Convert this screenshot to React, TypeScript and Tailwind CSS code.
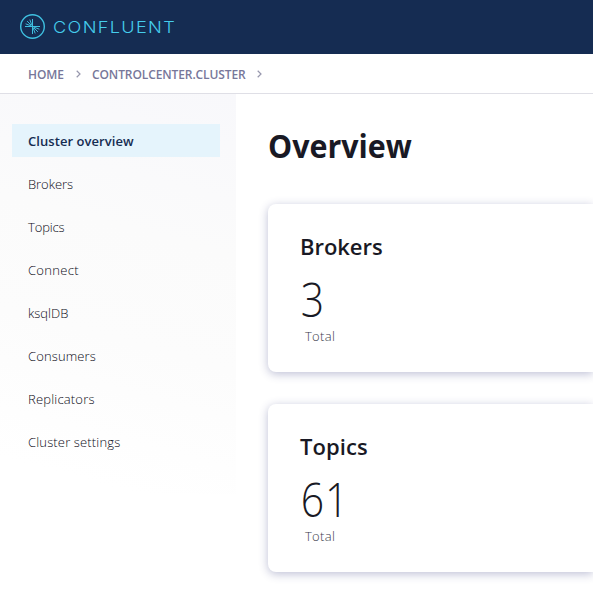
function Logo() {
  return (
    <svg className="h-[26px] w-[26px] shrink-0" viewBox="0 0 26 26" fill="none" stroke="#3fc0e0">
      <circle cx="12.5" cy="12.5" r="11.8" strokeWidth="1.4" />
      <path d="M5 12.5H20M12.5 5V20" strokeWidth="1" />
      <path
        d="M11.9 11.2L9.8 5.6M11.3 11.3L7.1 7.1M11.2 11.9L5.6 9.8M13.1 13.8L15.2 19.4M13.7 13.7L17.9 17.9M13.8 13.1L19.4 15.2"
        strokeWidth="0.95"
      />
    </svg>
  );
}

function Chevron() {
  return (
    <svg className="h-2 w-[5px] shrink-0" viewBox="0 0 5 8" fill="none" stroke="#9797ad" strokeWidth="1.2">
      <path d="M.7 .8L4 4L.7 7.2" />
    </svg>
  );
}

function NavItem({ label, spacing }: { label: string; spacing: string }) {
  return <div className={`mt-2.5 h-[33px] pl-4 leading-[34px] font-light ${spacing}`}>{label}</div>;
}

function Card({ title, value, spacing }: { title: string; value: string; spacing: string }) {
  return (
    <section className="h-[168px] rounded-l-lg bg-white pl-8 pt-6 shadow-[0_2px_10px_rgba(50,55,125,0.32)]">
      <h2 className={`h-9 text-[22px] leading-9 font-semibold text-[#191924] ${spacing}`}>{title}</h2>
      <div className="h-16 w-20 origin-left scale-x-[0.87] pt-[7px] pl-px text-[47px] leading-[56px] font-light tracking-[1px] text-[#191924]">
        {value}
      </div>
      <div className="pl-[5px] text-[13px] leading-4 font-light tracking-[0.3px] text-[#3a3a4a]">Total</div>
    </section>
  );
}

export default function App() {
  return (
    <div className="flex h-[593px] w-[593px] flex-col overflow-hidden bg-white font-['Open_Sans','Noto_Sans',sans-serif]">
      <header className="flex h-[54px] shrink-0 items-center bg-[#152c52] pl-5">
        <Logo />
        <span className="ml-[7px] origin-left scale-x-110 pb-px font-['Inter',sans-serif] text-[16.5px] leading-5 font-light tracking-[1.2px] text-[#45cdec]">
          CONFLUENT
        </span>
      </header>
      <nav className="flex h-10 shrink-0 items-center border-b border-[#dfdfe6] pl-7 text-xs font-semibold text-[#77779a]">
        <span className="w-[47.5px] pt-0.5 tracking-[-0.1px]">HOME</span>
        <Chevron />
        <span className="ml-[11.5px] w-[165px] pt-0.5 tracking-[-0.1px]">CONTROLCENTER.CLUSTER</span>
        <Chevron />
      </nav>
      <div className="flex min-h-0 flex-1">
        <aside className="w-59 shrink-0">
          <div className="h-[400px] bg-[linear-gradient(195deg,#f8f8fb_0%,#fbfbfb_35%,#fcfcfc_60%,#ffffff_92%)] pt-[30px] pr-4 pl-3 text-[13px] text-[#0c0c18]">
            <div className="h-[33px] bg-[#e5f4fc] pl-4 leading-[34px] font-semibold tracking-[0.06px] text-[#152c52]">
              Cluster overview
            </div>
            <NavItem label="Brokers" spacing="tracking-[-0.05px]" />
            <NavItem label="Topics" spacing="tracking-[-0.15px]" />
            <NavItem label="Connect" spacing="tracking-[0.3px]" />
            <NavItem label="ksqlDB" spacing="tracking-[0px]" />
            <NavItem label="Consumers" spacing="tracking-[0.12px]" />
            <NavItem label="Replicators" spacing="tracking-[0.18px]" />
            <NavItem label="Cluster settings" spacing="tracking-[0.15px]" />
          </div>
        </aside>
        <main className="min-w-0 flex-1 pl-8">
          <h1 className="h-[110px] origin-left scale-x-95 pt-8 text-[32px] leading-10 font-bold text-[#191924]">
            Overview
          </h1>
          <div className="flex flex-col gap-8">
            <Card title="Brokers" value="3" spacing="tracking-[-0.05px]" />
            <Card title="Topics" value="61" spacing="tracking-[0.1px]" />
          </div>
        </main>
      </div>
    </div>
  );
}
